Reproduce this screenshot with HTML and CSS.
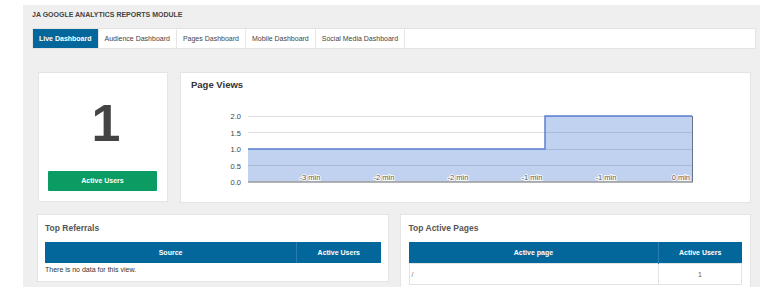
FILE: index.html
```html
<!DOCTYPE html>
<html lang="en">
<head>
  <meta charset="UTF-8" />
  <title>JA Google Analytics Reports Module</title>
  <link rel="stylesheet" href="styles.css">
</head>
<body>
  <div class="module">
    <h1 class="module-title">JA GOOGLE ANALYTICS REPORTS MODULE</h1>

    <div class="tabs">
      <div class="tab active">Live Dashboard</div>
      <div class="tab">Audience Dashboard</div>
      <div class="tab">Pages Dashboard</div>
      <div class="tab">Mobile Dashboard</div>
      <div class="tab">Social Media Dashboard</div>
    </div>

    <div class="top-row">
      <div class="card users-card">
        <div class="users-count">1</div>
        <div class="users-btn">Active Users</div>
      </div>

      <div class="card views-card">
        <h2 class="views-title">Page Views</h2>
        <svg class="chart" width="560" height="92" viewBox="0 0 560 92">
          <!-- grid -->
          <line x1="67" y1="16.5" x2="511" y2="16.5" stroke="#dddddd" />
          <line x1="67" y1="32.5" x2="511" y2="32.5" stroke="#dddddd" />
          <line x1="67" y1="49.5" x2="511" y2="49.5" stroke="#dddddd" />
          <line x1="67" y1="65.5" x2="511" y2="65.5" stroke="#dddddd" />
          <!-- area -->
          <path d="M67 82 L67 49 L364 49 L364 16 L511 16 L511 82 Z" fill="#3366cc" fill-opacity="0.3" />
          <path d="M67 49 L364 49 L364 16 L511 16" fill="none" stroke="#5b81d0" stroke-width="1.5" />
          <line x1="511.5" y1="16" x2="511.5" y2="82" stroke="#66708a" />
          <line x1="67" y1="82" x2="512" y2="82" stroke="#9a9a9a" stroke-width="1.5" />
          <!-- y labels -->
          <g class="ylab" text-anchor="end">
            <text x="60" y="19">2.0</text>
            <text x="60" y="35.5">1.5</text>
            <text x="60" y="52">1.0</text>
            <text x="60" y="68.5">0.5</text>
            <text x="60" y="85">0.0</text>
          </g>
          <!-- x labels -->
          <g class="xlab" text-anchor="middle">
            <text x="129" y="80">-3 min</text>
            <text x="203" y="80">-2 min</text>
            <text x="277" y="80">-2 min</text>
            <text x="351" y="80">-1 min</text>
            <text x="425" y="80">-1 min</text>
            <text x="509" y="80" text-anchor="end">0 min</text>
          </g>
        </svg>
      </div>
    </div>

    <div class="bottom-row">
      <div class="card list-card">
        <h2 class="list-title">Top Referrals</h2>
        <table class="data-table">
          <thead>
            <tr><th class="col-main">Source</th><th>Active Users</th></tr>
          </thead>
        </table>
        <div class="no-data">There is no data for this view.</div>
      </div>

      <div class="card list-card">
        <h2 class="list-title">Top Active Pages</h2>
        <table class="data-table">
          <thead>
            <tr><th class="col-main">Active page</th><th>Active Users</th></tr>
          </thead>
          <tbody>
            <tr><td class="page-path">/</td><td class="page-count">1</td></tr>
          </tbody>
        </table>
      </div>
    </div>
  </div>
</body>
</html>
```

FILE: styles.css
```css
body {
  margin: 0;
  background: #ffffff;
  font-family: "Liberation Sans", Arial, sans-serif;
  color: #333;
  overflow: hidden;
}
.module {
  margin: 5px 0 0 23px;
  background: #efefef;
  padding: 5px 4px 0 9px;
  height: 282px;
  box-sizing: border-box;
}
.module-title {
  margin: 0 0 9px 0;
  font-size: 7px;
  line-height: 9px;
  font-weight: bold;
  color: #444;
}
.tabs {
  display: flex;
  background: white;
  border: 1px solid #e3e3e3;
  height: 19px;
}
.tab {
  padding: 0 6px;
  font-size: 7px;
  line-height: 19px;
  color: #444;
  border-right: 1px solid #e6e6e6;
}
.tab.active {
  background: #04679c;
  color: white;
  font-weight: bold;
}
.top-row {
  display: grid;
  grid-template-columns: 130px 1fr;
  column-gap: 12px;
  margin: 23px 5px 0 6px;
  height: 131px;
}
.card {
  background: white;
  border: 1px solid #e4e4e4;
  box-sizing: border-box;
}
.users-card {
  display: flex;
  flex-direction: column;
  height: 130px;
}
.users-count {
  flex: 1;
  display: flex;
  align-items: center;
  justify-content: center;
  font-size: 52px;
  font-weight: bold;
  color: #444;
  padding: 2px 0 0 6px;
}
.users-btn {
  margin: 0 10px 10px 9px;
  height: 20px;
  line-height: 20px;
  background: #0a9c63;
  border-radius: 1px;
  color: white;
  font-size: 7px;
  font-weight: bold;
  text-align: center;
}
.views-title {
  margin: 5px 0 0 0;
  padding-left: 10px;
  font-size: 9.5px;
  line-height: 13px;
  color: #333;
}
.chart {
  display: block;
  margin-top: 9px;
}
.chart text {
  font-family: "Liberation Sans", Arial, sans-serif;
  font-size: 7.5px;
}
.ylab text {
  fill: #444;
}
.xlab text {
  fill: #555;
  stroke: #ffffff;
  stroke-width: 1.6px;
  paint-order: stroke;
}
.bottom-row {
  display: grid;
  grid-template-columns: 1fr 1fr;
  column-gap: 11px;
  margin: 11px 5px 0 5px;
  align-items: start;
}
.list-card {
  padding: 7px 7px 6px 7px;
}
.list-card + .list-card {
  padding: 7px 8px 6px 8px;
  height: 80px;
}
.list-title {
  margin: 0 0 8px 0;
  font-size: 8.5px;
  line-height: 12px;
  color: #555;
}
.data-table {
  width: 100%;
  border-collapse: collapse;
  font-size: 7px;
}
.data-table th {
  background: #04679c;
  color: white;
  font-weight: bold;
  height: 21px;
  padding: 0;
  border-left: 1px solid #2a7db0;
}
.data-table th:first-child {
  border-left: none;
}
.data-table .col-main {
  width: 75%;
}
.data-table td {
  height: 20px;
  border: 1px solid #e3e3e3;
  padding: 0 2px;
}
.page-path {
  color: #777;
}
.page-count {
  text-align: center;
  color: #8a5310;
}
.no-data {
  font-size: 7px;
  line-height: 10px;
  margin-top: 2px;
  color: #333;
}
```
